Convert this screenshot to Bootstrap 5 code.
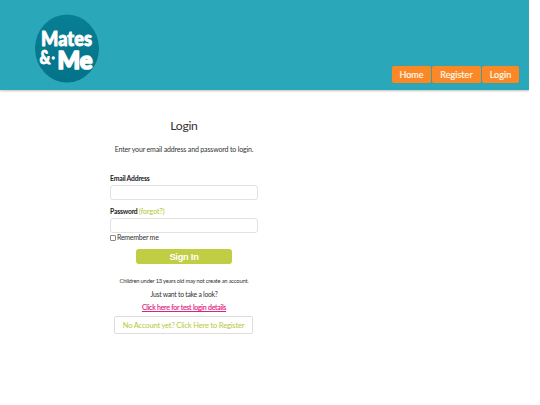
<!DOCTYPE html>
<html lang="en">
<head>
    <title>Mates &amp; Me - Login</title>
    <meta charset="UTF-8">
    <link rel="stylesheet" href="https://cdn.jsdelivr.net/npm/bootstrap@5.3.2/dist/css/bootstrap.min.css">
    <style>
        body {
            font-family: Lato, "Noto Sans", sans-serif;
            font-size: 7px;
            line-height: 10px;
            letter-spacing: -.15px;
            color: #333;
            overflow: hidden;
        }
        .page { width: 529px; }
        .site-header {
            height: 90px;
            padding: 14px 10px 7px 35px;
            background: #2aa7b8;
            box-shadow: 0 1px 2px rgba(0, 0, 0, .25);
            clip-path: inset(0 0 -5px 0);
        }
        .site-nav { gap: 1px; }
        .site-nav .nav-link {
            height: 17px;
            padding: 0;
            border-radius: 2px;
            background: #fb8827;
            box-shadow: 0 0 1px #b97b38;
            color: #fff6e8;
            font-size: 9px;
            line-height: 17px;
            letter-spacing: .05px;
            text-align: center;
            -webkit-text-stroke: .2px #fff6e8;
        }
        .nav-home { width: 39px; }
        .nav-register { width: 49px; }
        .nav-login { width: 37px; }
        .login-box { width: 148px; margin-left: 110px; padding-top: 26px; }
        .login-box h1 {
            margin: 0 0 9px;
            font-size: 12.2px;
            line-height: 19px;
            letter-spacing: -.3px;
            color: #333;
        }
        .intro { margin-bottom: 19px; }
        .login-box .form-label {
            display: block;
            margin: 0;
            font-weight: 700;
            font-size: 6.8px;
            letter-spacing: -.2px;
            color: #222;
        }
        .login-box .form-control {
            height: 15px;
            min-height: 0;
            padding: 0 4px;
            border: 1px solid #e2e2e2;
            border-radius: 3px;
            font-size: 7px;
        }
        .mail-field { margin: 2px 0 6px; }
        .pw-label { gap: 1.5px; margin-bottom: 2px; }
        .forgot { color: #b4c41e; letter-spacing: 0; }
        .remember { height: 9px; line-height: 9px; gap: 1px; letter-spacing: -.25px; }
        .remember .form-check-input {
            width: 6px;
            height: 6px;
            margin: 0;
            border: 1px solid #888;
            border-radius: 1px;
        }
        .btn-signin {
            width: 96px;
            height: 15px;
            margin-top: 7px;
            padding: 0;
            border: 0;
            border-radius: 3px;
            background: #c1cd42;
            color: #fff;
            font: bold 9.4px/15px "Liberation Sans", sans-serif;
            letter-spacing: -.3px;
        }
        .notes { padding-top: 12px; }
        .notes p { margin-bottom: 3px; }
        .age-note { font-size: 5.8px; letter-spacing: -.2px; }
        .look-note { font-size: 6.8px; letter-spacing: -.25px; }
        .test-link { color: #e0217f; letter-spacing: -.26px; -webkit-text-stroke: .15px #e0217f; }
        .login-box .btn-account {
            width: 139px;
            height: 18px;
            margin: 1px 1px 0 0;
            padding: 0;
            border: 1px solid #ddd;
            border-radius: 2px;
            color: #b9c93c;
            font-size: 7.6px;
            line-height: 16px;
            letter-spacing: -.2px;
        }
    </style>
</head>
<body>
    <div class="page">
        <header class="site-header d-flex justify-content-between">
            <svg width="64" height="69" viewBox="0 0 64 69" role="img" aria-label="Mates &amp; Me">
                <defs>
                    <linearGradient id="disc" x1="0" y1="0" x2="0" y2="1">
                        <stop offset="0" stop-color="#087f94"/>
                        <stop offset="1" stop-color="#04738a"/>
                    </linearGradient>
                </defs>
                <ellipse cx="32" cy="34.5" rx="32" ry="34" fill="url(#disc)"/>
                <g fill="#fff" stroke="#fff" stroke-linejoin="round" font-family="Lato, sans-serif" font-weight="900" letter-spacing="0">
                    <text x="6" y="31.5" font-size="20.5" stroke-width=".9" textLength="51" lengthAdjust="spacingAndGlyphs">Mates</text>
                    <text x="4.5" y="49.5" font-size="18" stroke-width=".8" textLength="11" lengthAdjust="spacingAndGlyphs">&amp;</text>
                    <circle cx="18.3" cy="44" r="1.7" stroke="none"/>
                    <text x="22.500" y="54.5" font-size="25" stroke-width="1.7" textLength="35" lengthAdjust="spacingAndGlyphs">Me</text>
                </g>
            </svg>
            <nav class="site-nav nav align-self-end flex-nowrap">
                <a class="nav-link nav-home" href="#">Home</a>
                <a class="nav-link nav-register" href="#">Register</a>
                <a class="nav-link nav-login" href="#">Login</a>
            </nav>
        </header>

        <main class="login-box">
            <h1 class="text-center fw-normal">Login</h1>
            <p class="intro text-center">Enter your email address and password to login.</p>

            <form>
                <label class="form-label" for="email">Email Address</label>
                <input type="email" class="form-control mail-field" id="email">
                <div class="pw-label d-flex">
                    <label class="form-label" for="password">Password</label>
                    <a class="forgot text-decoration-none" href="#">(forgot?)</a>
                </div>
                <input type="password" class="form-control" id="password">
                <div class="remember d-flex align-items-center">
                    <input type="checkbox" class="form-check-input" id="remember">
                    <label for="remember">Remember me</label>
                </div>
                <button type="button" class="btn btn-signin d-block mx-auto">Sign In</button>
            </form>

            <div class="notes text-center">
                <p class="age-note">Children under 13 years old may not create an account.</p>
                <p class="look-note">Just want to take a look?</p>
                <p><a class="test-link" href="#">Click here for test login details</a></p>
                <a class="btn btn-account" href="#">No Account yet? Click Here to Register</a>
            </div>
        </main>
    </div>
    <script src="https://cdn.jsdelivr.net/npm/bootstrap@5.3.2/dist/js/bootstrap.bundle.min.js"></script>
</body>
</html>
